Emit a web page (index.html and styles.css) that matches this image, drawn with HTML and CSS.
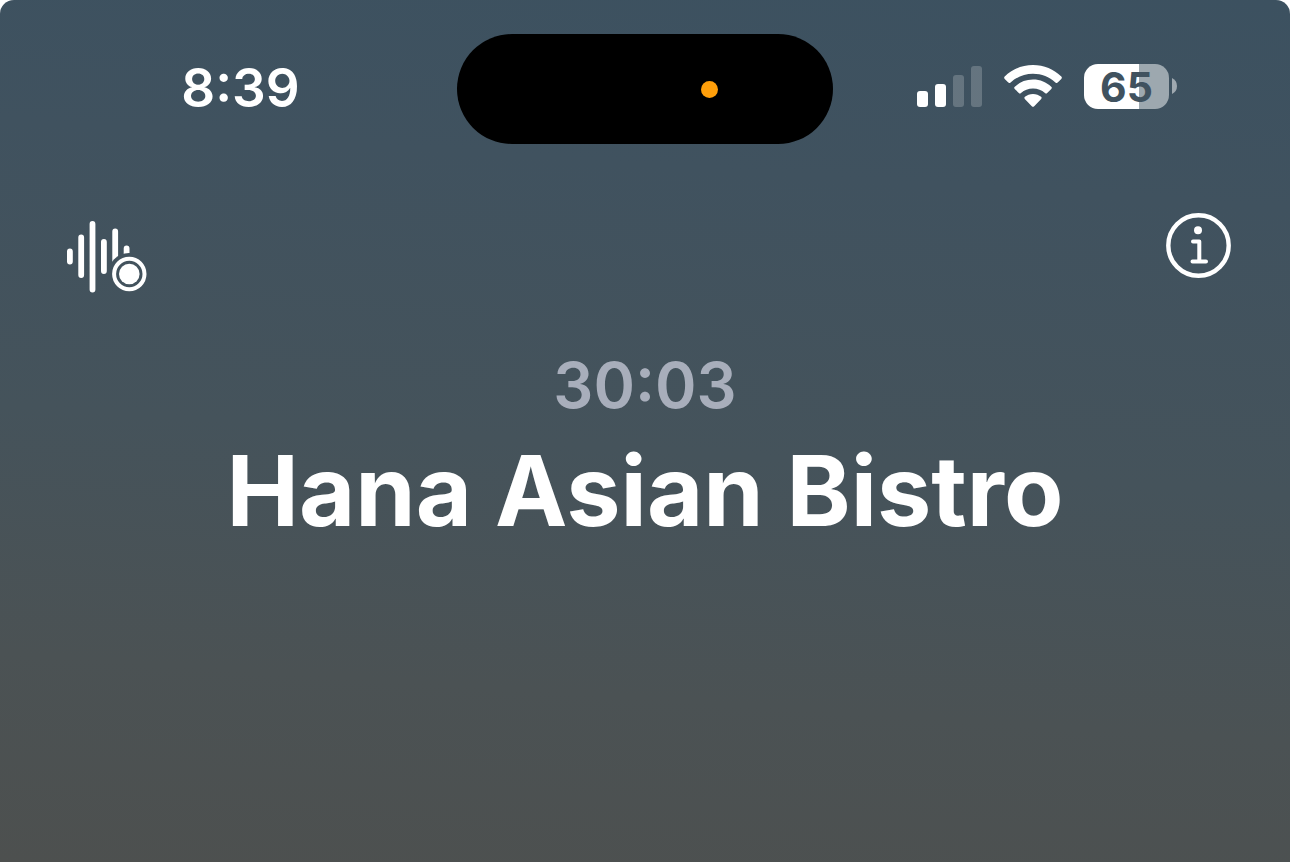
FILE: index.html
```html
<!DOCTYPE html>
<html lang="en">
<head>
<meta charset="utf-8">
<meta name="viewport" content="width=device-width, initial-scale=1">
<title>Hana Asian Bistro</title>
<link rel="stylesheet" href="styles.css">
</head>
<body>
<div class="screen">
  <header class="status">
    <time class="clock">8:39</time>
    <div class="island"><span class="mic-dot"></span></div>
    <div class="indicators">
      <svg class="signal" viewBox="0 0 65 45" role="img" aria-label="Signal, 2 of 4 bars">
        <g fill="#fff">
          <rect x="0" y="27" width="11" height="16" rx="3"/>
          <rect x="18" y="20" width="11" height="23" rx="3"/>
          <g opacity=".2">
            <rect x="36" y="11" width="11" height="32" rx="3"/>
            <rect x="54" y="2" width="11" height="41" rx="3"/>
          </g>
        </g>
      </svg>
      <svg class="wifi" viewBox="0 0 58 45" role="img" aria-label="Wi-Fi">
        <g fill="#fff">
          <path d="M29 1C40 1 50 5.200 57.300 12.600Q58.400 13.800 57.300 15L53.700 18.600Q52.600 19.600 51.400 18.500C45.500 13 37.600 9.800 29 9.800S12.500 13 6.600 18.500Q5.400 19.600 4.300 18.600L.7 15Q-.4 13.800 .7 12.600C8 5.200 18 1 29 1Z"/>
          <path d="M29 15.600C36.400 15.600 42.300 18.300 47.200 22.700Q48.400 23.800 47.300 24.900L43.200 28.900Q42.200 29.900 41 28.900C37.700 26.100 33.700 24.400 29 24.400S20.300 26.100 17 28.900Q15.800 29.900 14.800 28.900L10.700 24.900Q9.600 23.800 10.800 22.700C15.700 18.300 21.600 15.600 29 15.600Z"/>
          <path d="M29 29.900C32.200 29.900 34.900 31 37.100 32.800Q38.300 33.900 37.200 35L30.200 42.200Q29 43.300 27.800 42.200L20.800 35Q19.700 33.900 20.900 32.800C23.100 31 25.800 29.900 29 29.900Z"/>
        </g>
      </svg>
      <div class="battery">
        <span class="battery-level">65</span>
        <svg class="battery-cap" viewBox="0 0 5 16" aria-hidden="true"><path d="M0 0Q5 2.500 5 8T0 16Z" fill="#fff" opacity=".5"/></svg>
      </div>
    </div>
  </header>

  <main class="call">
    <div class="actions">
      <button class="action record" type="button" aria-label="Record call">
        <svg class="record-icon" viewBox="0 0 80 72" aria-hidden="true">
          <defs>
            <mask id="badge-gap">
              <rect width="80" height="72" fill="#fff"/>
              <circle cx="62" cy="53" r="21" fill="#000"/>
            </mask>
          </defs>
          <g stroke="#fff" stroke-width="5.800" stroke-linecap="round" mask="url(#badge-gap)">
            <path d="M2.900 30.500V40.500M14.200 16.500V54M25.500 3V68.500M36.900 21V50M48.200 10.500V54M59.600 27.500V45"/>
          </g>
          <circle cx="62.300" cy="53" r="15.200" fill="none" stroke="#fff" stroke-width="4"/>
          <circle cx="62.300" cy="53" r="10.300" fill="#fff"/>
        </svg>
      </button>
      <button class="action" type="button" aria-label="Call information">
        <svg class="info-icon" viewBox="0 0 65 65" aria-hidden="true">
          <g fill="none" stroke="#fff" stroke-linecap="round" stroke-linejoin="round">
            <circle cx="32.500" cy="32.500" r="30.200" stroke-width="4.400"/>
            <path d="M27 28.500H33.300V48.500M26.500 48.500H40" stroke-width="4"/>
          </g>
          <circle cx="32" cy="17.300" r="4" fill="#fff"/>
        </svg>
      </button>
    </div>
    <p class="timer">30:03</p>
    <h1 class="caller">Hana Asian Bistro</h1>
  </main>
</div>
</body>
</html>
```
FILE: styles.css
```css
* {
  box-sizing: border-box;
}

body {
  margin: 0;
  background: #fff;
  color: #fff;
  font-family: Inter, "Liberation Sans", sans-serif;
}

.screen {
  min-height: 100vh;
  border-radius: 14px 14px 0 0;
  background: linear-gradient(184deg, #3c5160 0%, #40525f 22%, #45535b 52%, #4b5254 78%, #4d504f 100%);
}

.status {
  display: grid;
  grid-template-columns: 1fr auto 1fr;
  align-items: center;
  padding: 34px 24px 0;
}

.clock {
  justify-self: center;
  padding-bottom: 2px;
  font-size: 53px;
  font-weight: 600;
  line-height: 64px;
}

.island {
  display: flex;
  align-items: center;
  justify-content: flex-end;
  width: 376px;
  height: 110px;
  padding-right: 115px;
  border-radius: 55px;
  background: #000;
}

.mic-dot {
  width: 17px;
  height: 17px;
  border-radius: 50%;
  background: #ff9f0a;
}

.indicators {
  display: flex;
  justify-content: flex-end;
  align-items: center;
  gap: 22px;
  padding: 0 89px 6px 0;
}

.signal {
  width: 65px;
  height: 45px;
}

.wifi {
  width: 58px;
  height: 45px;
}

.battery {
  display: flex;
  align-items: center;
  gap: 3px;
}

.battery-level {
  width: 85px;
  height: 45px;
  border-radius: 14px;
  background: linear-gradient(90deg, #fff 65%, #9da8af 65%);
  color: #40525f;
  font-size: 41px;
  font-weight: 700;
  line-height: 46px;
  text-align: center;
}

.battery-cap {
  width: 5px;
  height: 16px;
}

.call {
  padding: 69px 59px 0;
  text-align: center;
}

.actions {
  display: flex;
  justify-content: space-between;
  align-items: flex-start;
}

.action {
  padding: 0;
  border: 0;
  background: none;
  cursor: pointer;
}

.record {
  padding: 8px 0 0 8px;
}

.action svg {
  display: block;
}

.record-icon {
  width: 80px;
  height: 72px;
}

.info-icon {
  width: 65px;
  height: 65px;
}

.timer {
  margin: 52px 0 0;
  color: #a8aebb;
  font-size: 63px;
  font-weight: 600;
  line-height: 80px;
}

.caller {
  margin: 6px 0 0;
  font-size: 97px;
  font-weight: 700;
  line-height: 120px;
}
```
